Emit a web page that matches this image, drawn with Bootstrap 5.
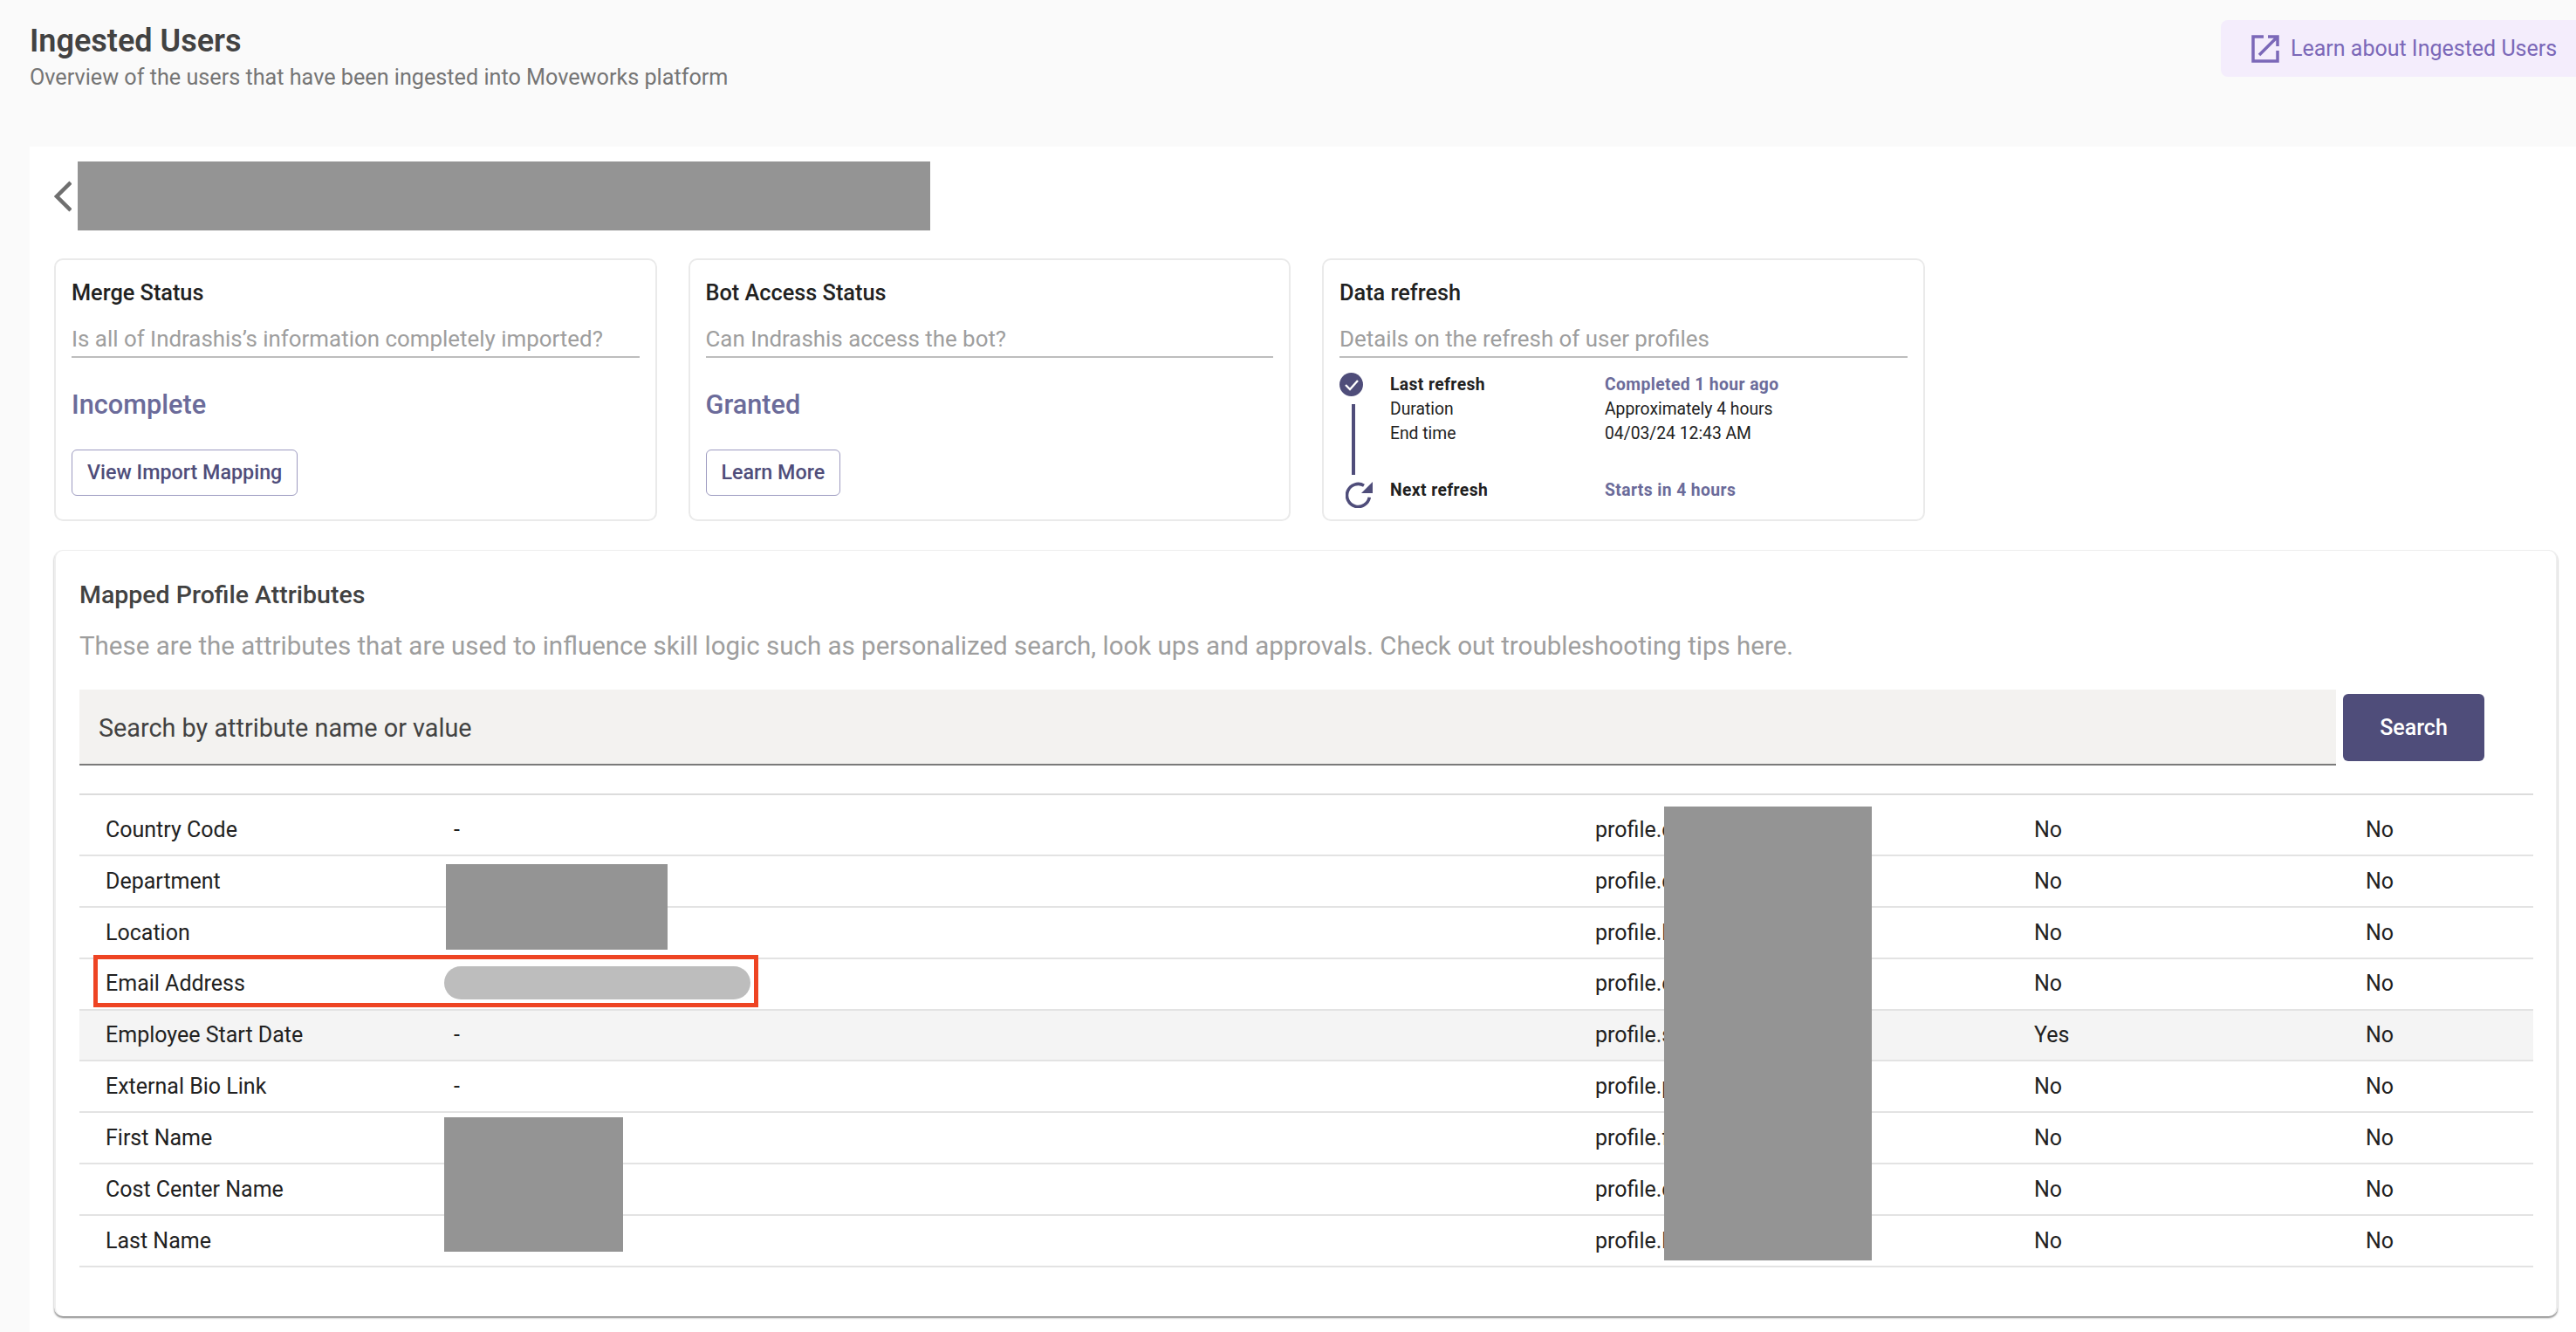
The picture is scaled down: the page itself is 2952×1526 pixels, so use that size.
<!DOCTYPE html>
<html lang="en">
<head>
  <meta charset="UTF-8">
  <meta name="viewport" content="width=device-width, initial-scale=1.0">
  <title>Ingested Users</title>
  <link href="https://cdn.jsdelivr.net/npm/bootstrap@5.3.0/dist/css/bootstrap.min.css" rel="stylesheet">
  <style>
    body {
      background: #fafafa;
      font-family: Roboto, "Liberation Sans", sans-serif;
      color: #212121;
      height: 1526px;
      overflow: hidden;
    }
    .page-head {
      height: 168px;
      padding: 23px 0 0 34px;
    }
    .page-title {
      font-size: 36px;
      font-weight: 600;
      line-height: 48px;
      color: #424242;
      margin: 0;
    }
    .page-sub {
      font-size: 25.2px;
      line-height: 30px;
      color: #757575;
      margin: 3px 0 0;
    }
    .learn-btn {
      width: 407px;
      height: 65px;
      background: #f4edfc;
      color: #7b68b8;
      font-size: 25px;
      border-radius: 8px 0 0 8px;
      padding-left: 35px;
      gap: 13px;
      text-decoration: none;
    }
    .panel {
      background: #fff;
      height: 1358px;
      margin-left: 34px;
      padding: 17px 21px 0 28px;
    }
    .back-row {
      height: 79px;
      gap: 7px;
      margin-bottom: 32px;
    }
    .redact-title {
      width: 977px;
      height: 79px;
      background: #949494;
    }
    .status-row {
      gap: 36px;
      margin-bottom: 33px;
    }
    .status-card {
      width: 690.5px;
      height: 301px;
      border: 2px solid #eaeaea;
      border-radius: 10px;
      padding: 20px 18px 0 18px;
      background: #fff;
    }
    .status-title {
      font-size: 25.3px;
      font-weight: 500;
      line-height: 36px;
      color: #212121;
    }
    .status-sub {
      font-size: 25.9px;
      line-height: 36px;
      color: #9e9e9e;
      border-bottom: 2px solid #bdbdbd;
      margin-top: 16px;
      padding-bottom: 2px;
    }
    .status-value {
      font-size: 30.7px;
      font-weight: 500;
      line-height: 40px;
      color: #6b6b9a;
      margin-top: 34px;
    }
    .outline-btn {
      height: 53px;
      margin-top: 31px;
      padding: 0 17px;
      border: 1px solid #9d9bc0;
      border-radius: 6px;
      background: #fff;
      color: #4f4d7a;
      font-size: 23.3px;
      font-weight: 500;
    }
    .timeline {
      margin-top: 17px;
    }
    .tl-icons {
      width: 58px;
      flex: none;
    }
    .tl-line {
      width: 4px;
      height: 81px;
      background: #4f4d7a;
      margin: 9px 0 8px 14px;
    }
    .tl-refresh {
      margin-left: 7px;
    }
    .tl-row {
      font-size: 19.3px;
      line-height: 28px;
      height: 28px;
      color: #212121;
    }
    .tl-row span:first-child {
      width: 246px;
    }
    .tl-strong {
      font-weight: 700;
      letter-spacing: .4px;
    }
    .tl-accent {
      font-weight: 700;
      letter-spacing: .4px;
      color: #6b6b9a;
    }
    .tl-next {
      margin-top: 37px;
    }
    .attr-card {
      width: 2869px;
      height: 878px;
      border: 1px solid #eee;
      border-width: 1px 2px 0 2px;
      border-radius: 10px;
      box-shadow: 0 2px 2px rgba(0, 0, 0, .45);
      padding: 29px 28px 0 27px;
      background: #fff;
    }
    .attr-title {
      font-size: 28.5px;
      font-weight: 500;
      line-height: 44px;
      color: #424242;
    }
    .attr-sub {
      font-size: 29.5px;
      line-height: 40px;
      color: #9e9e9e;
      margin-top: 16px;
    }
    .search-row {
      margin-top: 30px;
      gap: 8px;
      height: 87px;
    }
    .search-input.form-control {
      width: 2586px;
      height: 87px;
      flex: none;
      background: #f3f2f0;
      border: 0;
      border-bottom: 2px solid #7a7a7a;
      border-radius: 0;
      padding: 3px 22px 0;
      font-size: 28.8px;
      color: #424242;
    }
    .search-input::placeholder {
      color: #424242;
      opacity: 1;
    }
    .search-btn.btn {
      width: 162px;
      height: 77px;
      background: #4f4d7a;
      border: 0;
      border-radius: 6px;
      color: #fff;
      font-size: 25px;
      font-weight: 500;
    }
    .attr-wrap {
      margin-top: 32px;
      width: 2812px;
    }
    .attr-table {
      table-layout: fixed;
      width: 2812px;
      margin: 0;
      border-top: 2px solid #dcdcdc;
      font-size: 25px;
      color: #212121;
    }
    .attr-table td {
      height: 58.85px;
      padding: 0;
      vertical-align: middle;
      border-bottom: 2px solid #e3e3e3;
      background: transparent;
      box-shadow: none;
    }
    .attr-table tr:first-child td { height: 70px; padding-top: 12px; }
    .attr-table td:nth-child(1) { width: 429px; padding-left: 30px; }
    .attr-table td:nth-child(2) { width: 1308px; }
    .attr-table td:nth-child(3) { width: 503px; }
    .attr-table td:nth-child(4) { width: 380px; }
    .attr-table tr.row-hover td { background: #f4f4f4; }
    .redact {
      position: absolute;
      background: #949494;
    }
    .redact-dept { left: 420px; top: 81px; width: 254px; height: 98px; }
    .redact-name { left: 418px; top: 371px; width: 205px; height: 154px; }
    .redact-path { left: 1816px; top: 15px; width: 238px; height: 520px; }
    .redact-pill {
      position: absolute;
      left: 418px;
      top: 198px;
      width: 351px;
      height: 38px;
      border-radius: 19px;
      background: #bdbdbd;
    }
    .red-box {
      position: absolute;
      left: 16px;
      top: 185px;
      width: 762px;
      height: 60px;
      border: 5px solid #ee4423;
    }
  </style>
</head>
<body>
  <div class="page-head d-flex justify-content-between align-items-start">
    <div>
      <h1 class="page-title">Ingested Users</h1>
      <p class="page-sub">Overview of the users that have been ingested into Moveworks platform</p>
    </div>
    <a class="learn-btn d-flex align-items-center" href="#">
      <svg width="32" height="32" viewBox="0 0 32 32" fill="none" stroke="#7b68b8" stroke-width="3.5">
        <path d="M14 2H2v28h28V18"/>
        <path d="M9 23 29 3M19 2h11v11"/>
      </svg>
      <span>Learn about Ingested Users</span>
    </a>
  </div>

  <div class="panel">
    <div class="back-row d-flex align-items-center">
      <svg width="20" height="36" viewBox="0 0 20 36" fill="none" stroke="#6f6f6f" stroke-width="4.5">
        <path d="M19 2 3 18l16 16"/>
      </svg>
      <div class="redact-title"></div>
    </div>

    <div class="status-row d-flex">
      <div class="status-card">
        <div class="status-title">Merge Status</div>
        <div class="status-sub">Is all of Indrashis’s information completely imported?</div>
        <div class="status-value">Incomplete</div>
        <button type="button" class="outline-btn">View Import Mapping</button>
      </div>
      <div class="status-card">
        <div class="status-title">Bot Access Status</div>
        <div class="status-sub">Can Indrashis access the bot?</div>
        <div class="status-value">Granted</div>
        <button type="button" class="outline-btn">Learn More</button>
      </div>
      <div class="status-card">
        <div class="status-title">Data refresh</div>
        <div class="status-sub">Details on the refresh of user profiles</div>
        <div class="timeline d-flex">
          <div class="tl-icons">
            <svg class="d-block" width="27" height="27" viewBox="0 0 27 27">
              <circle cx="13.5" cy="13.5" r="13.5" fill="#4f4d7a"/>
              <path d="M7 14l5 5 9-10" fill="none" stroke="#fff" stroke-width="2.4"/>
            </svg>
            <div class="tl-line"></div>
            <svg class="tl-refresh d-block" width="31" height="30" viewBox="0 0 31 30">
              <path d="M27.3 17.8A13 13 0 1 1 21 4.2" fill="none" stroke="#4f4d7a" stroke-width="3.6"/>
              <path d="M31 0v13H18z" fill="#4f4d7a"/>
            </svg>
          </div>
          <div class="flex-grow-1">
            <div class="tl-row d-flex"><span class="tl-strong">Last refresh</span><span class="tl-accent">Completed 1 hour ago</span></div>
            <div class="tl-row d-flex"><span>Duration</span><span>Approximately 4 hours</span></div>
            <div class="tl-row d-flex"><span>End time</span><span>04/03/24 12:43 AM</span></div>
            <div class="tl-row tl-next d-flex"><span class="tl-strong">Next refresh</span><span class="tl-accent">Starts in 4 hours</span></div>
          </div>
        </div>
      </div>
    </div>

    <div class="attr-card">
      <div class="attr-title">Mapped Profile Attributes</div>
      <div class="attr-sub">These are the attributes that are used to influence skill logic such as personalized search, look ups and approvals. Check out troubleshooting tips here.</div>
      <div class="search-row d-flex align-items-center">
        <input type="text" class="search-input form-control" placeholder="Search by attribute name or value">
        <button type="button" class="search-btn btn">Search</button>
      </div>
      <div class="attr-wrap position-relative">
        <table class="attr-table table">
          <tbody>
            <tr><td>Country Code</td><td>-</td><td>profile.c</td><td>No</td><td>No</td></tr>
            <tr><td>Department</td><td>-</td><td>profile.d</td><td>No</td><td>No</td></tr>
            <tr><td>Location</td><td>-</td><td>profile.l</td><td>No</td><td>No</td></tr>
            <tr><td>Email Address</td><td></td><td>profile.e</td><td>No</td><td>No</td></tr>
            <tr class="row-hover"><td>Employee Start Date</td><td>-</td><td>profile.s</td><td>Yes</td><td>No</td></tr>
            <tr><td>External Bio Link</td><td>-</td><td>profile.p</td><td>No</td><td>No</td></tr>
            <tr><td>First Name</td><td>-</td><td>profile.f</td><td>No</td><td>No</td></tr>
            <tr><td>Cost Center Name</td><td>-</td><td>profile.c</td><td>No</td><td>No</td></tr>
            <tr><td>Last Name</td><td>-</td><td>profile.l</td><td>No</td><td>No</td></tr>
          </tbody>
        </table>
        <div class="redact redact-dept"></div>
        <div class="redact redact-name"></div>
        <div class="redact redact-path"></div>
        <div class="redact-pill"></div>
        <div class="red-box"></div>
      </div>
    </div>
  </div>
  <script src="https://cdn.jsdelivr.net/npm/bootstrap@5.3.0/dist/js/bootstrap.bundle.min.js"></script>
</body>
</html>
